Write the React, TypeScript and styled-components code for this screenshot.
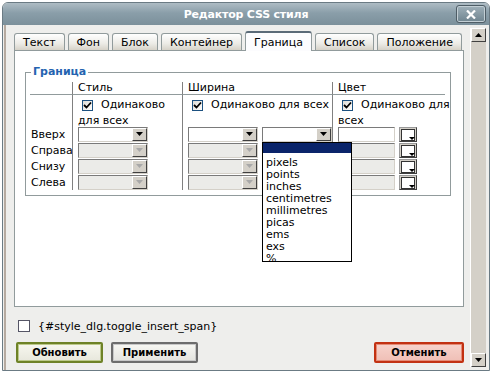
import React from 'react';
import styled, { createGlobalStyle, css } from 'styled-components';

const GlobalStyle = createGlobalStyle`
  html, body { margin: 0; padding: 0; background: #ffffff; }
  body { font-family: "DejaVu Sans", Verdana, sans-serif; font-size: 11px; color: #000; }
`;

const Window = styled.div`
  position: relative;
  margin: 2px 0 0 2px;
  width: 486px;
  height: 367px;
  border: 1px solid #6b7b84;
  border-radius: 6px 6px 0 0;
  background: #eeeeec;
  display: flex;
  flex-direction: column;
  overflow: hidden;
`;

const TitleBar = styled.div`
  position: relative;
  height: 22px;
  flex: none;
  background: linear-gradient(#aebcc4, #8a9ea9 45%, #7b909b);
  display: flex;
  align-items: center;
  justify-content: center;
  color: #fff;
  font-weight: bold;
  font-size: 11px;
  letter-spacing: -0.2px;
`;

const CloseButton = styled.div`
  position: absolute;
  right: 3px;
  top: 2px;
  width: 28px;
  height: 16px;
  border: 1px solid #4e5d66;
  border-radius: 3px;
  background: linear-gradient(#9fb0b9, #6f848f);
  box-shadow: inset 0 0 0 1px #c2ced4;
  display: flex;
  align-items: center;
  justify-content: center;
`;

const Body = styled.div`
  flex: 1;
  display: flex;
  border-left: 2px solid #b6aaa0;
  margin-left: 1px;
`;

const Content = styled.div`
  flex: 1;
  display: flex;
  flex-direction: column;
  padding: 7px 6px 0 8px;
`;

const TabRow = styled.div`
  display: flex;
  align-items: flex-end;
  gap: 3px;
  height: 18px;
`;

const Tab = styled.div<{ $active?: boolean }>`
  height: 16px;
  padding: 0 8px;
  display: flex;
  align-items: center;
  justify-content: center;
  border: 1px solid #919b9c;
  border-bottom: none;
  border-radius: 3px 3px 0 0;
  background: linear-gradient(#ffffff, #ecebe6 60%, #d6d2c8);
  ${p => p.$active && css`
    height: 18px;
    background: #fcfcfe;
    border-top: 2px solid #5a6a78;
    margin-bottom: -1px;
    position: relative;
    z-index: 1;
  `}
`;

const Panel = styled.div`
  box-sizing: border-box;
  height: 257px;
  flex: none;
  border: 1px solid #919b9c;
  background: #ffffff;
  padding: 21px 10px 0 10px;
`;

const Fieldset = styled.div`
  position: relative;
  box-sizing: border-box;
  width: 426px;
  height: 124px;
  border: 1px solid #919b9c;
  padding: 9px 0 0 4px;
`;

const Legend = styled.div`
  position: absolute;
  top: -8px;
  left: 5px;
  padding: 0 2px;
  background: #fff;
  color: #2463b0;
  font-weight: bold;
  font-size: 11px;
`;

const Grid = styled.div`
  display: grid;
  grid-template-columns: 42px 110px 150px 113px;
  grid-template-rows: 13px 31px 16px 16px 16px 16px;
`;

const Head = styled.div<{ $line?: boolean }>`
  border-bottom: 1px solid #919b9c;
  padding-left: 5px;
  line-height: 12px;
  ${p => p.$line && css`border-left: 1px solid #808080;`}
`;

const Cell = styled.div<{ $line?: boolean }>`
  display: flex;
  align-items: center;
  gap: 4px;
  padding-left: 5px;
  ${p => p.$line && css`border-left: 1px solid #808080;`}
`;

const CheckCell = styled.div<{ $line?: boolean }>`
  padding: 2px 0 0 5px;
  line-height: 16px;
  white-space: nowrap;
  ${p => p.$line && css`border-left: 1px solid #808080;`}
`;

const Label = styled.div`
  display: flex;
  align-items: center;
  padding-left: 1px;
`;

const CheckLine = styled.div`
  display: flex;
  align-items: center;
  gap: 8px;
  padding-left: 4px;
  height: 16px;
`;

const Box = styled.div`
  width: 11px;
  height: 11px;
  border: 1px solid #1c5180;
  background: linear-gradient(135deg, #dcdcd7, #fff);
  box-sizing: border-box;
  display: flex;
  align-items: center;
  justify-content: center;
`;

const PlainBox = styled(Box)`
  width: 12px;
  height: 12px;
  background: #fff;
  border-color: #556;
`;

const SelectBox = styled.div<{ $w: number; $disabled?: boolean }>`
  width: ${p => p.$w}px;
  height: 15px;
  box-sizing: border-box;
  border: 1px solid;
  border-color: #7a7a7a #d4d0c8 #d4d0c8 #7a7a7a;
  background: ${p => (p.$disabled ? '#ebebe8' : '#fff')};
  display: flex;
  justify-content: flex-end;
`;

const SelectButton = styled.div<{ $disabled?: boolean }>`
  width: 15px;
  height: 13px;
  box-sizing: border-box;
  background: #d4d0c8;
  border: 1px solid;
  border-color: #fff #404040 #404040 #fff;
  display: flex;
  align-items: center;
  justify-content: center;
`;

const TextInput = styled.div<{ $disabled?: boolean }>`
  width: 57px;
  height: 15px;
  box-sizing: border-box;
  border: 1px solid;
  border-color: #7a7a7a #d4d0c8 #d4d0c8 #7a7a7a;
  background: ${p => (p.$disabled ? '#ebebe8' : '#fff')};
`;

const ColorPick = styled.div`
  width: 18px;
  height: 15px;
  box-sizing: border-box;
  border: 1px solid;
  border-color: #9a9a9a #404040 #404040 #9a9a9a;
  background: #d4d0c8;
  position: relative;
`;

const ColorInner = styled.div`
  position: absolute;
  left: 1px;
  top: 1px;
  width: 12px;
  height: 10px;
  border: 1px solid #333;
  background: #fff;
`;

const ColorArrow = styled.div`
  position: absolute;
  right: 1px;
  bottom: 1px;
  width: 0;
  height: 0;
  border-left: 3px solid transparent;
  border-right: 3px solid transparent;
  border-top: 3px solid #000;
`;

const Dropdown = styled.div`
  position: absolute;
  left: 259px;
  top: 139px;
  width: 88px;
  height: 118px;
  border: 1px solid #000;
  background: #fff;
  z-index: 5;
`;

const Option = styled.div<{ $selected?: boolean }>`
  height: 12px;
  line-height: 12px;
  padding-left: 3px;
  ${p => p.$selected && css`
    height: 10px;
    background: #0a246a;
    margin-bottom: 4px;
  `}
`;

const Footer = styled.div`
  display: flex;
  flex-direction: column;
  padding: 12px 0 0 2px;
`;

const FooterCheck = styled.div`
  display: flex;
  align-items: center;
  gap: 8px;
  padding-left: 2px;
  height: 14px;
`;

const ButtonRow = styled.div`
  display: flex;
  gap: 8px;
  margin-top: 9px;
`;

const Button = styled.div<{ $tone: 'green' | 'gray' | 'red'; $push?: boolean }>`
  width: 87px;
  height: 21px;
  box-sizing: border-box;
  display: flex;
  align-items: center;
  justify-content: center;
  font-weight: bold;
  font-size: 10px;
  border-radius: 2px;
  border: 2px solid;
  ${p => p.$push && css`margin-left: auto; width: 90px;`}
  ${p =>
    p.$tone === 'green'
      ? css`
          border-color: #6e8227;
          background: linear-gradient(#f7f7ef, #e7e7dc);
          box-shadow: inset 0 0 0 1px #bcc98a;
        `
      : p.$tone === 'red'
      ? css`
          border-color: #c23112;
          background: linear-gradient(#f7d3cc, #efbfb6);
          box-shadow: inset 0 0 0 1px #e58b76;
        `
      : css`
          border-color: #6d6d6d;
          background: linear-gradient(#f7f7f3, #e4e4df);
          box-shadow: inset 0 0 0 1px #c8c8c8;
        `}
`;

const Scrollbar = styled.div`
  width: 15px;
  margin: 3px 3px 3px 0;
  background: #d4d0c8;
  border-left: 1px solid #fff;
  display: flex;
  flex-direction: column;
  justify-content: space-between;
`;

const ScrollButton = styled.div`
  height: 14px;
  box-sizing: border-box;
  background: #d4d0c8;
  border: 1px solid;
  border-color: #fff #404040 #404040 #fff;
  display: flex;
  align-items: center;
  justify-content: center;
`;

const Arrow = ({ up, color = '#000' }: { up?: boolean; color?: string }) => (
  <svg width="7" height="4" viewBox="0 0 7 4">
    <path d={up ? 'M0 4 L3.5 0 L7 4 Z' : 'M0 0 L7 0 L3.5 4 Z'} fill={color} />
  </svg>
);

const Tick = () => (
  <svg width="9" height="9" viewBox="0 0 9 9">
    <path d="M1 4 L3.5 6.5 L8 1.5" stroke="#000" strokeWidth="1.8" fill="none" />
  </svg>
);

const Select = ({ w, disabled }: { w: number; disabled?: boolean }) => (
  <SelectBox $w={w} $disabled={disabled}>
    <SelectButton $disabled={disabled}>
      <Arrow color={disabled ? '#a8a8a8' : '#000'} />
    </SelectButton>
  </SelectBox>
);

const Color = () => (
  <ColorPick>
    <ColorInner />
    <ColorArrow />
  </ColorPick>
);

const tabs = ['Текст', 'Фон', 'Блок', 'Контейнер', 'Граница', 'Список', 'Положение'];
const sides = ['Вверх', 'Справа', 'Снизу', 'Слева'];
const units = ['pixels', 'points', 'inches', 'centimetres', 'millimetres', 'picas', 'ems', 'exs', '%'];

export default function App() {
  return (
    <>
      <GlobalStyle />
      <Window>
        <TitleBar>
          Редактор CSS стиля
          <CloseButton>
            <svg width="10" height="9" viewBox="0 0 10 9">
              <path d="M1 0.5 L9 8.5 M9 0.5 L1 8.5" stroke="#fff" strokeWidth="2.2" />
            </svg>
          </CloseButton>
        </TitleBar>
        <Body>
          <Content>
            <TabRow>
              {tabs.map(t => (
                <Tab key={t} $active={t === 'Граница'}>{t}</Tab>
              ))}
            </TabRow>
            <Panel>
              <Fieldset>
                <Legend>Граница</Legend>
                <Grid>
                  <Head />
                  <Head $line>Стиль</Head>
                  <Head $line>Ширина</Head>
                  <Head $line>Цвет</Head>

                  <div />
                  <CheckCell $line>
                    <CheckLine><Box><Tick /></Box>Одинаково</CheckLine>
                    <div>для всех</div>
                  </CheckCell>
                  <CheckCell $line>
                    <CheckLine><Box><Tick /></Box>Одинаково для всех</CheckLine>
                  </CheckCell>
                  <CheckCell $line>
                    <CheckLine><Box><Tick /></Box>Одинаково для</CheckLine>
                    <div>всех</div>
                  </CheckCell>

                  {sides.map((s, i) => (
                    <React.Fragment key={s}>
                      <Label>{s}</Label>
                      <Cell $line>
                        <Select w={70} disabled={i > 0} />
                      </Cell>
                      <Cell $line>
                        <Select w={70} disabled={i > 0} />
                        {i === 0 && <Select w={71} />}
                      </Cell>
                      <Cell $line>
                        <TextInput $disabled={i > 0} />
                        <Color />
                      </Cell>
                    </React.Fragment>
                  ))}
                </Grid>
              </Fieldset>
            </Panel>
            <Footer>
              <FooterCheck>
                <PlainBox />
                {'{#style_dlg.toggle_insert_span}'}
              </FooterCheck>
              <ButtonRow>
                <Button $tone="green">Обновить</Button>
                <Button $tone="gray">Применить</Button>
                <Button $tone="red" $push>Отменить</Button>
              </ButtonRow>
            </Footer>
          </Content>
          <Scrollbar>
            <ScrollButton><Arrow up /></ScrollButton>
            <ScrollButton><Arrow /></ScrollButton>
          </Scrollbar>
        </Body>
        <Dropdown>
          <Option $selected />
          {units.map(u => (
            <Option key={u}>{u}</Option>
          ))}
        </Dropdown>
      </Window>
    </>
  );
}
